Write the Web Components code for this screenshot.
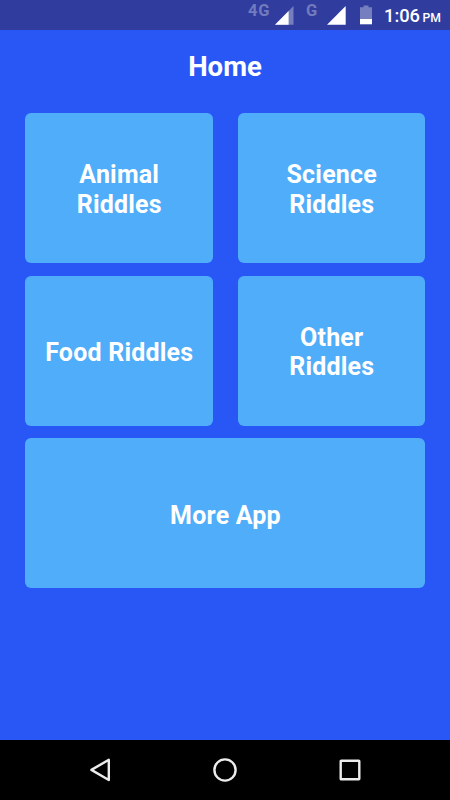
<!DOCTYPE html>
<html lang="en">
<head>
  <meta charset="UTF-8">
  <meta name="viewport" content="width=device-width, initial-scale=1.0">
  <title>Home</title>
  <style>
    body {
      margin: 0;
      font-family: Roboto, sans-serif;
      color: #ffffff;
      background: #2957f6;
    }
  </style>
</head>
<body>
  <riddle-app>
    <status-bar slot="status" time="1:06" period="PM"></status-bar>
    <span slot="title">Home</span>
    <riddle-card>Animal Riddles</riddle-card>
    <riddle-card>Science Riddles</riddle-card>
    <riddle-card>Food Riddles</riddle-card>
    <riddle-card>Other Riddles</riddle-card>
    <riddle-card wide>More App</riddle-card>
    <nav-bar slot="nav"></nav-bar>
  </riddle-app>

  <script>
    class StatusBar extends HTMLElement {
      constructor() {
        super();
        this.attachShadow({ mode: 'open' });
      }

      connectedCallback() {
        this.shadowRoot.innerHTML = `
          <style>
            :host {
              display: flex;
              justify-content: flex-end;
              height: 30px;
              padding-right: 10px;
              box-sizing: border-box;
              background: #303d9f;
              white-space: nowrap;
            }

            svg {
              display: block;
              flex: none;
              height: 30px;
            }

            .network {
              flex: none;
              font-size: 16.5px;
              font-weight: 700;
              line-height: 22px;
              color: #727bbd;
            }

            .lte {
              width: 27px;
              letter-spacing: 0.7px;
            }

            .gsm {
              width: 21px;
              margin-left: 12px;
            }

            .battery {
              margin-left: 13px;
            }

            .clock {
              width: 56px;
              margin-left: 12px;
              font-size: 18.3px;
              font-weight: 500;
              line-height: 32px;
            }

            .period {
              font-size: 12.2px;
              margin-left: 2.5px;
            }
          </style>

          <span class="network lte">4G</span>
          <svg width="19" viewBox="0 0 19 30" aria-hidden="true">
            <path d="M0 24.7L18.5 6V24.7Z" fill="#757ebf"/>
            <path d="M0 24.7L13.6 11V24.7Z" fill="#fff"/>
          </svg>
          <span class="network gsm">G</span>
          <svg width="20" viewBox="0 0 20 30" aria-hidden="true">
            <path d="M0 24.7L18.7 6V24.7Z" fill="#fff"/>
          </svg>
          <svg class="battery" width="12" viewBox="0 0 12 30" aria-hidden="true">
            <path d="M3.5 5.5H8.5V7.3H12V19H0V7.3H3.5Z" fill="#757ebf"/>
            <path d="M0 19H12V24.3H0Z" fill="#fff"/>
          </svg>
          <span class="clock">${this.getAttribute('time')}<span class="period">${this.getAttribute('period')}</span></span>
        `;
      }
    }

    class RiddleCard extends HTMLElement {
      constructor() {
        super();
        this.attachShadow({ mode: 'open' });
        this.shadowRoot.innerHTML = `
          <style>
            :host {
              display: flex;
              align-items: center;
              justify-content: center;
              height: 150px;
              padding: 3.5px 18px 0 19px;
              box-sizing: border-box;
              border-radius: 6px;
              background: #50adf9;
              font-size: 25px;
              font-weight: 700;
              line-height: 29.3px;
              letter-spacing: 0.2px;
              text-align: center;
            }

            /* La tarjeta ancha ocupa las dos columnas. */
            :host([wide]) {
              grid-column: 1 / -1;
              padding-top: 5px;
            }
          </style>

          <span><slot></slot></span>
        `;
      }
    }

    class NavBar extends HTMLElement {
      constructor() {
        super();
        this.attachShadow({ mode: 'open' });
        this.shadowRoot.innerHTML = `
          <style>
            :host {
              display: flex;
              align-items: center;
              justify-content: center;
              gap: 101px;
              height: 60px;
              background: #000000;
            }

            svg {
              display: block;
              width: 24px;
              height: 24px;
              fill: none;
              stroke: #ececec;
              stroke-width: 2.4;
              stroke-linejoin: round;
            }
          </style>

          <svg viewBox="0 0 24 24" aria-label="Back"><path d="M20.8 1.8V22L3.4 11.9Z"/></svg>
          <svg viewBox="0 0 24 24" aria-label="Home"><circle cx="12" cy="12" r="10.6"/></svg>
          <svg viewBox="0 0 24 24" aria-label="Recents"><rect x="2.7" y="2.7" width="18.6" height="18.6" rx="0.5"/></svg>
        `;
      }
    }

    class RiddleApp extends HTMLElement {
      constructor() {
        super();
        this.attachShadow({ mode: 'open' });
        this.shadowRoot.innerHTML = `
          <style>
            :host {
              display: flex;
              flex-direction: column;
              height: 100vh;
            }

            h1 {
              margin: 0;
              height: 83px;
              padding-top: 21px;
              box-sizing: border-box;
              font-size: 27.5px;
              font-weight: 700;
              line-height: 32px;
              text-align: center;
            }

            main {
              flex: 1;
              display: grid;
              grid-template-columns: 1fr 1fr;
              align-content: start;
              gap: 12.5px 25px;
              padding: 0 25px;
            }
          </style>

          <slot name="status"></slot>
          <h1><slot name="title"></slot></h1>
          <main><slot></slot></main>
          <slot name="nav"></slot>
        `;
      }
    }

    customElements.define('status-bar', StatusBar);
    customElements.define('riddle-card', RiddleCard);
    customElements.define('nav-bar', NavBar);
    customElements.define('riddle-app', RiddleApp);
  </script>
</body>
</html>
